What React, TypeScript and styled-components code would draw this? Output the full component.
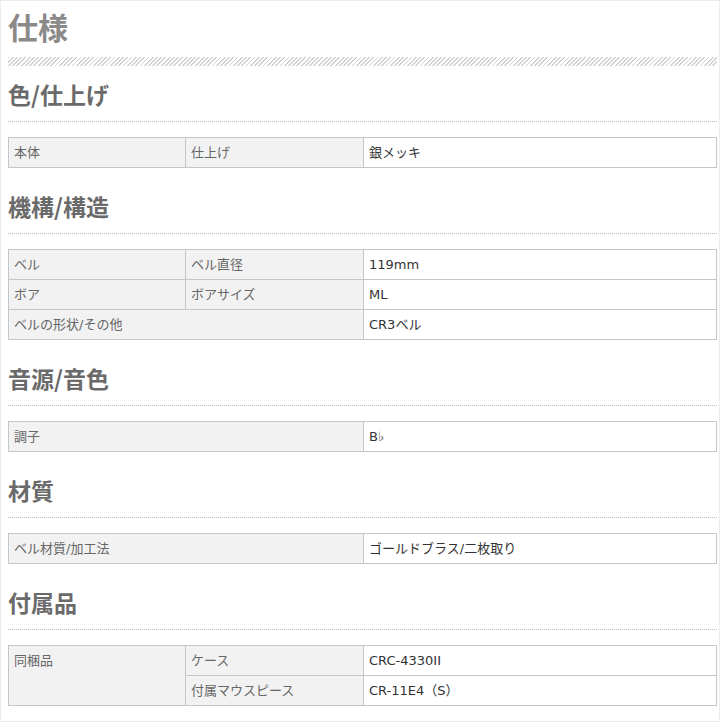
import React from "react";
import styled, { createGlobalStyle } from "styled-components";

const GlobalStyle = createGlobalStyle`
  html, body { margin: 0; padding: 0; background: #fff; }
  * { box-sizing: border-box; }
`;

const Page = styled.div`
  width: 720px;
  height: 722px;
  border: 1px solid #ececec;
  padding: 0 2px 0 7px;
  overflow: hidden;
  font-family: "Noto Sans CJK JP", sans-serif;
`;

const Title = styled.h1`
  margin: 0;
  padding-top: 10px;
  font-size: 30px;
  line-height: 30px;
  font-weight: 700;
  color: #8a8a8a;
`;

const HatchBar = styled.div`
  margin-top: 16px;
  height: 9px;
  background: repeating-linear-gradient(
    135deg,
    #d2d2d2 0 1.3px,
    #ffffff 1.3px 3px
  );
`;

const Section = styled.section<{ $first?: boolean }>`
  margin-top: ${(p) => (p.$first ? "17px" : "27px")};
`;

const Heading = styled.h2`
  margin: 0;
  font-size: 23px;
  line-height: 23px;
  font-weight: 700;
  color: #6a6a6a;
`;

const DottedRule = styled.div`
  margin-top: 15px;
  border-top: 1px dotted #bdbdbd;
`;

const SpecTable = styled.table`
  margin-top: 15px;
  width: 100%;
  border-collapse: collapse;
  table-layout: fixed;
  font-family: "DejaVu Sans", "Noto Sans CJK JP", sans-serif;
  font-size: 13px;
`;

const Cell = styled.td<{ $label?: boolean }>`
  border: 1px solid #c6c6c6;
  padding: 6px 5px;
  line-height: 17px;
  height: 29px;
  vertical-align: top;
  background: ${(p) => (p.$label ? "#f2f2f2" : "#ffffff")};
  color: ${(p) => (p.$label ? "#666666" : "#333333")};
  white-space: nowrap;
`;

type Row = { cells: { text: string; label?: boolean; colSpan?: number; rowSpan?: number }[] };
type Spec = { title: string; rows: Row[] };

const specs: Spec[] = [
  {
    title: "色/仕上げ",
    rows: [
      { cells: [{ text: "本体", label: true }, { text: "仕上げ", label: true }, { text: "銀メッキ" }] },
    ],
  },
  {
    title: "機構/構造",
    rows: [
      { cells: [{ text: "ベル", label: true }, { text: "ベル直径", label: true }, { text: "119mm" }] },
      { cells: [{ text: "ボア", label: true }, { text: "ボアサイズ", label: true }, { text: "ML" }] },
      { cells: [{ text: "ベルの形状/その他", label: true, colSpan: 2 }, { text: "CR3ベル" }] },
    ],
  },
  {
    title: "音源/音色",
    rows: [{ cells: [{ text: "調子", label: true, colSpan: 2 }, { text: "B♭" }] }],
  },
  {
    title: "材質",
    rows: [{ cells: [{ text: "ベル材質/加工法", label: true, colSpan: 2 }, { text: "ゴールドブラス/二枚取り" }] }],
  },
  {
    title: "付属品",
    rows: [
      {
        cells: [
          { text: "同梱品", label: true, rowSpan: 2 },
          { text: "ケース", label: true },
          { text: "CRC-4330II" },
        ],
      },
      { cells: [{ text: "付属マウスピース", label: true }, { text: "CR-11E4（S）" }] },
    ],
  },
];

export default function App() {
  return (
    <>
      <GlobalStyle />
      <Page>
        <Title>仕様</Title>
        <HatchBar />
        {specs.map((s, i) => (
          <Section key={s.title} $first={i === 0}>
            <Heading>{s.title}</Heading>
            <DottedRule />
            <SpecTable>
              <colgroup>
                <col style={{ width: 177 }} />
                <col style={{ width: 178 }} />
                <col />
              </colgroup>
              <tbody>
                {s.rows.map((r, ri) => (
                  <tr key={ri}>
                    {r.cells.map((c, ci) => (
                      <Cell key={ci} $label={c.label} colSpan={c.colSpan} rowSpan={c.rowSpan}>
                        {c.text}
                      </Cell>
                    ))}
                  </tr>
                ))}
              </tbody>
            </SpecTable>
          </Section>
        ))}
      </Page>
    </>
  );
}
